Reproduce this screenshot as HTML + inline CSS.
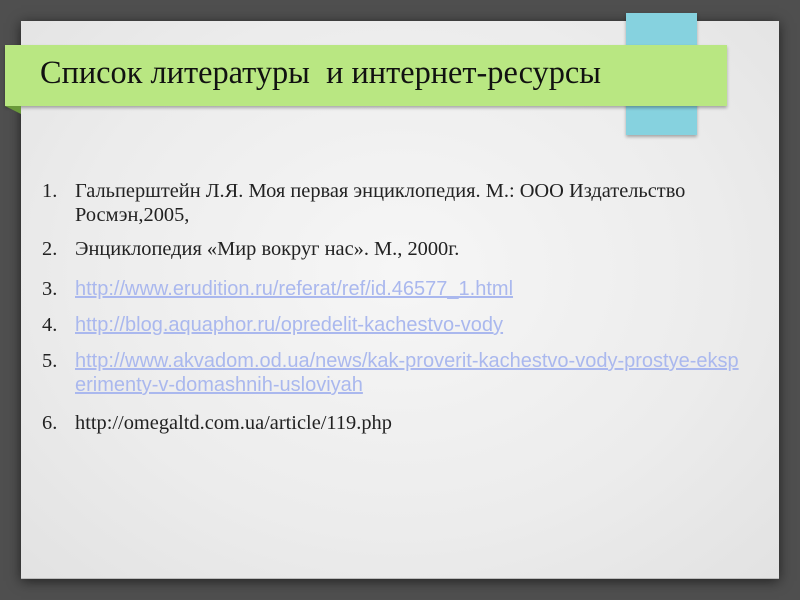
<!DOCTYPE html>
<html><head><meta charset="utf-8"><style>
*{margin:0;padding:0}
body{width:800px;height:600px;background:#4f4f4f;position:relative;overflow:hidden;font-family:"Liberation Serif","Noto Serif CJK SC",serif}
.slide{position:absolute;left:21px;top:21px;width:758px;height:557px;background:radial-gradient(ellipse at 50% 45%,#f6f6f6 0%,#ececec 60%,#e2e2e2 100%);box-shadow:0 2px 12px rgba(0,0,0,.6);border-bottom:1px solid #bbb}
.blue{position:absolute;left:626px;top:13px;width:71px;height:122px;background:#86d2df;box-shadow:0 2px 3px rgba(0,0,0,.3)}
.green{position:absolute;left:5px;top:45px;width:722px;height:61px;background:#b9e782;box-shadow:0 2px 3px rgba(0,0,0,.3)}
.fold{position:absolute;left:5px;top:106px;width:0;height:0;border-top:8px solid #6a9a3a;border-left:16px solid transparent}
.title{position:absolute;left:40px;top:55px;font-size:33px;color:#111;white-space:pre;transform:scaleX(0.98);transform-origin:left}
.item{position:absolute;left:42px;font-size:20.4px;color:#222;line-height:24px}
.item .n{position:absolute;left:0;width:30px}
.item .t{position:absolute;left:33px;width:660px}
.l{color:#aab8ee;text-decoration:underline;font-family:"Liberation Sans",sans-serif;font-size:20px}
</style></head><body>
<div class="slide"></div>
<div class="blue"></div>
<div class="green"></div>
<div class="fold"></div>
<div class="title">Список литературы  и интернет-ресурсы</div>
<div class="item" style="top:179px"><span class="n">1.</span><span class="t">Гальперштейн Л.Я. Моя первая энциклопедия. М.: ООО Издательство Росмэн,2005,</span></div>
<div class="item" style="top:237px"><span class="n">2.</span><span class="t">Энциклопедия «Мир вокруг нас». М., 2000г.</span></div>
<div class="item" style="top:277px"><span class="n">3.</span><span class="t"><span class="l">http://www.erudition.ru/referat/ref/id.46577_1.html</span></span></div>
<div class="item" style="top:313px"><span class="n">4.</span><span class="t"><span class="l">http://blog.aquaphor.ru/opredelit-kachestvo-vody</span></span></div>
<div class="item" style="top:349px"><span class="n">5.</span><span class="t" style="word-break:break-all;width:674px"><span class="l">http://www.akvadom.od.ua/news/kak-proverit-kachestvo-vody-prostye-eksperimenty-v-domashnih-usloviyah</span></span></div>
<div class="item" style="top:411px"><span class="n">6.</span><span class="t">http://omegaltd.com.ua/article/119.php</span></div>
</body></html>
